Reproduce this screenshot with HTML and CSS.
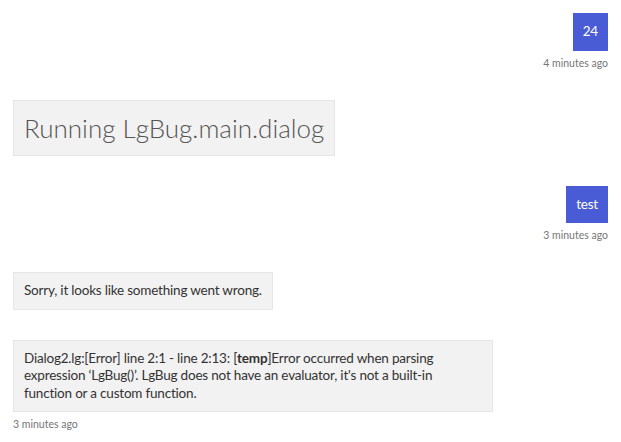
FILE: index.html
```html
<!DOCTYPE html>
<html lang="en">
<head>
  <meta charset="UTF-8">
  <meta name="viewport" content="width=device-width, initial-scale=1.0">
  <title>Bot Chat</title>
  <link rel="stylesheet" href="styles.css">
</head>
<body>

  <div class="transcript">
    <div class="activity from-user">
      <div class="bubble user">24</div>
      <div class="timestamp">4 minutes ago</div>
    </div>

    <div class="activity from-bot">
      <div class="bubble bot large">Running LgBug.main.dialog</div>
    </div>

    <div class="activity from-user">
      <div class="bubble user">test</div>
      <div class="timestamp">3 minutes ago</div>
    </div>

    <div class="activity from-bot">
      <div class="bubble bot">Sorry, it looks like something went wrong.</div>
    </div>

    <div class="activity from-bot">
      <div class="bubble bot">Dialog2.lg:[Error] line 2:1 - line 2:13: [<strong>temp</strong>]Error occurred when parsing expression &lsquo;LgBug()&rsquo;. LgBug does not have an evaluator, it's not a built-in function or a custom function.</div>
      <div class="timestamp">3 minutes ago</div>
    </div>
  </div>

</body>
</html>
```

FILE: styles.css
```css
body {
  margin: 0;
  background-color: #fff;
  font-family: "Segoe UI", Lato, sans-serif;
  color: #333;
}
.transcript {
  display: flex;
  flex-direction: column;
  gap: 30px;
  padding: 13px 13px;
}
.activity {
  display: flex;
  flex-direction: column;
}
.from-user {
  align-items: flex-end;
}
.from-bot {
  align-items: flex-start;
}
.bubble {
  max-width: 458px;
  padding: 9px 10px;
  font-size: 13.5px;
  letter-spacing: -0.2px;
  line-height: 17.5px;
  border: 1px solid #e6e6e6;
}
.bot {
  background-color: #f2f2f2;
}
.user {
  padding: 9px 9px;
  background-color: #4a5cd5;
  border-color: #4a5cd5;
  color: #fff;
}
.large {
  padding: 10px;
  font-size: 26px;
  font-weight: 300;
  letter-spacing: 0;
  line-height: 34px;
  color: #555;
}
.timestamp {
  margin-top: 5px;
  font-size: 10.5px;
  line-height: 14px;
  color: #767676;
}
```
